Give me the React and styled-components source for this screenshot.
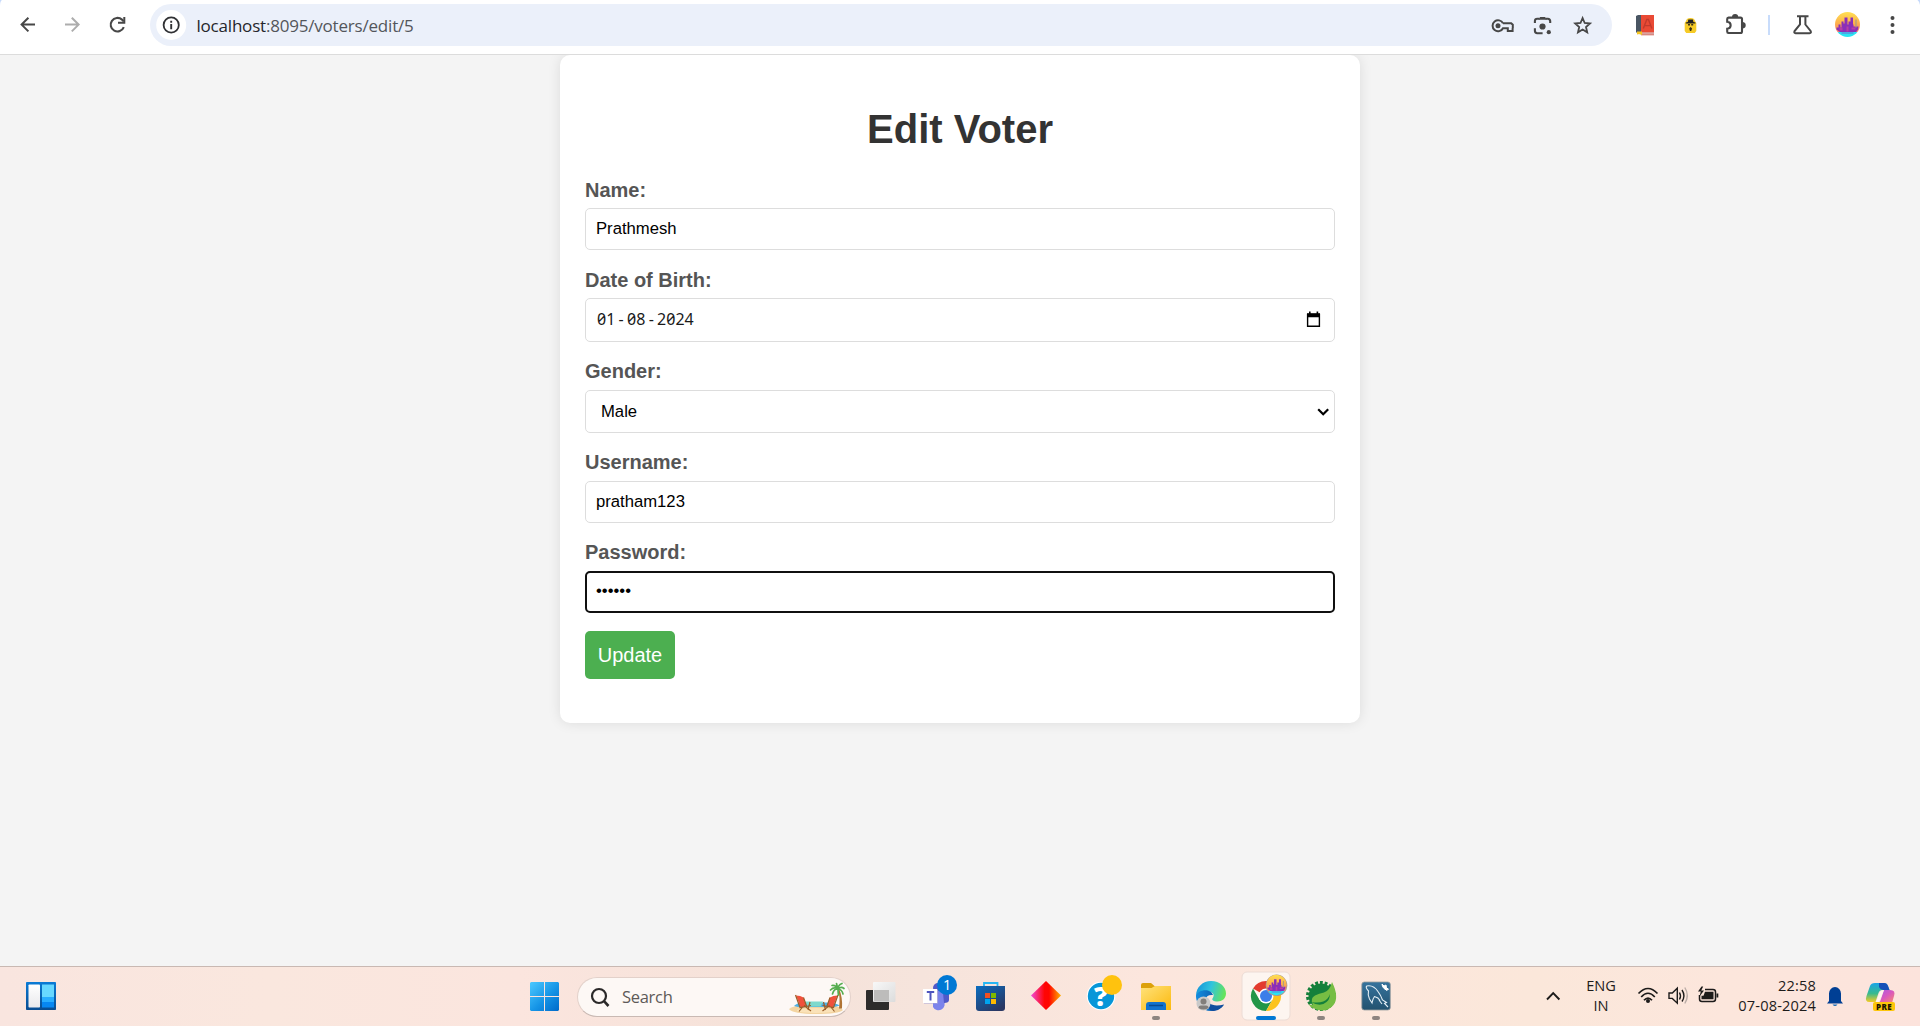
import React from "react";
import styled, { createGlobalStyle } from "styled-components";

const GlobalStyle = createGlobalStyle`
  * { box-sizing: border-box; }
  html, body { margin: 0; height: 100%; overflow: hidden; }
  body { font-family: "Liberation Sans", Arial, sans-serif; background: #f4f4f4; }
  svg { display: block; flex: none; }
`;

const Screen = styled.div`
  display: flex;
  flex-direction: column;
  width: 1920px;
  height: 1026px;
`;

/* ---------- browser toolbar ---------- */
const Toolbar = styled.header`
  display: flex;
  align-items: stretch;
  flex: none;
  height: 55px;
  padding-bottom: 4px;
  background: #fff;
  border-bottom: 1px solid #dcdcdc;
  position: relative;
  z-index: 1;
`;

const Omnibox = styled.div`
  display: flex;
  align-items: center;
  justify-content: space-between;
  width: 1462px;
  height: 42px;
  margin: 4px 8px 0 10px;
  border-radius: 21px;
  background: #ebf0fa;
`;

const Address = styled.div`
  display: flex;
  align-items: center;
`;

const Url = styled.span`
  margin-left: 4.5px;
  padding-top: 1px;
  font-family: "Open Sans", "Noto Sans", sans-serif;
  font-size: 17px;
  line-height: 24px;
  letter-spacing: -0.2px;
  color: #53565b;
  white-space: nowrap;
`;

const Host = styled.span`
  color: #25262a;
`;

/* ---------- page ---------- */
const Page = styled.main`
  flex: 1;
  display: flex;
  justify-content: center;
  align-items: flex-start;
  background: #f4f4f4;
  overflow: hidden;
`;

const Card = styled.form`
  display: flex;
  flex-direction: column;
  align-items: stretch;
  width: 800px;
  height: 668px;
  padding: 51px 25px 0;
  background: #fff;
  border-radius: 10px;
  box-shadow: 0 0 13px rgba(0, 0, 0, 0.1);
`;

const Title = styled.h1`
  margin: 0 0 27px;
  font-size: 40px;
  line-height: 46px;
  text-align: center;
  color: #333;
`;

const Group = styled.div`
  margin-bottom: ${(p) => p.$gap ?? 19}px;
`;

const Label = styled.label`
  display: block;
  margin-bottom: ${(p) => p.$space ?? 6}px;
  font-size: 20px;
  font-weight: bold;
  line-height: 23px;
  color: #555;
`;

const Field = styled.div`
  display: flex;
  align-items: center;
  justify-content: space-between;
  height: ${(p) => p.$height ?? 42}px;
  padding-left: ${(p) => (p.$focused ? 9 : 10)}px;
  border: ${(p) => (p.$focused ? "2px solid #101010" : "1px solid #ddd")};
  border-radius: 5px;
  background: #fff;
`;

const TextInput = styled.input`
  width: 100%;
  padding: 0 0 ${(p) => (p.type === "password" ? 2 : 0)}px;
  border: 0;
  outline: 0;
  background: transparent;
  color: #000;
  font-family: "Liberation Sans", Arial, sans-serif;
  font-size: 16.667px;
`;

const DateValue = styled.div`
  display: flex;
  gap: 1.3px;
  padding: 0 0 2px 1px;
  font-family: "Noto Sans", sans-serif;
  font-size: 16px;
  font-feature-settings: "zero";
  color: #1a1a1a;
`;

const Dash = styled.span`
  width: 9.15px;
  text-align: center;
`;

const Choice = styled.span`
  padding-left: 5px;
  font-size: 16.667px;
  color: #000;
`;

const Submit = styled.button`
  width: 90px;
  height: 48px;
  padding: 0;
  border: 0;
  border-radius: 5px;
  background: #4caf50;
  color: #fff;
  font-family: "Liberation Sans", Arial, sans-serif;
  font-size: 20px;
`;

/* ---------- taskbar ---------- */
const Taskbar = styled.footer`
  display: flex;
  flex: none;
  height: 60px;
  border-top: 1px solid #c9b8b2;
  background: linear-gradient(90deg, #f9e5df 0%, #fae7de 14%, #fbe5de 27%, #f5e2d9 40%, #f6e4dc 48%, #fce6dd 60%, #fbe7da 80%, #fce6dc 90%, #fce3dc 100%);
  font-family: "Open Sans", "Noto Sans", sans-serif;
`;

const Apps = styled.div`
  display: flex;
  align-items: center;
  flex: none;
  margin-left: 448px;
`;

const SearchBox = styled.div`
  display: flex;
  align-items: center;
  justify-content: space-between;
  width: 274px;
  height: 40px;
  margin: 0 3px 0 8px;
  border: 1px solid #e3d1ca;
  border-bottom-color: #c9b9b3;
  border-radius: 20px;
  background: #fdf8f5;
`;

const SearchPrompt = styled.div`
  display: flex;
  align-items: center;
  gap: 7px;
  font-size: 16.5px;
  letter-spacing: -0.3px;
  color: #5e5a58;
`;

const Tray = styled.div`
  display: flex;
  align-items: stretch;
  width: 390px;
  margin-left: auto;
`;

const TrayText = styled.div`
  width: ${(p) => p.$width}px;
  padding-top: 8px;
  text-align: ${(p) => p.$align};
  font-size: 14.6px;
  line-height: 20px;
  letter-spacing: ${(p) => p.$spacing ?? 0}px;
  color: #1d1b1a;
  white-space: nowrap;
`;

/* A drawing whose viewBox is a window [x, y, w, h] onto the screen grid. */
const Glyph = ({ box, children }) => (
  <svg width={box[2]} height={box[3]} viewBox={box.join(" ")} fill="none">
    {children}
  </svg>
);

const INK = "#474747";

const City = ({ cx, cy, r, id }) => (
  <g>
    <defs>
      <linearGradient id={id} x1="0" y1="0" x2="0" y2="1">
        <stop offset="0" stopColor="#ffe052" />
        <stop offset=".45" stopColor="#fdb04c" />
        <stop offset=".8" stopColor="#f77f6a" />
        <stop offset=".81" stopColor="#2fe0f2" />
        <stop offset="1" stopColor="#25e8f5" />
      </linearGradient>
    </defs>
    <circle cx={cx} cy={cy} r={r} fill={`url(#${id})`} />
    <g transform={`translate(${cx} ${cy}) scale(${r / 12.5})`}>
      <path d="M-11 3h2V0h2v3h1v-6h2v2h1v-6h3v7h1v-3h2v-4h2.500v7H6v2h3V2h2l-.5 3-2 2.500h-16L-11 5z" fill="#8a2fb8" />
      <path d="M-8 3h3v3h-3zM-1 2h2v5h-2zM4 3h4v2H4z" fill="#b63fa6" />
      <path d="M-6 8.500h12" stroke="#6a6fd6" strokeWidth="1" />
      <path d="M8.500-5v8" stroke="#a79c86" strokeWidth="1.200" />
    </g>
  </g>
);

const BrowserBar = () => (
  <Toolbar>
    <Glyph box={[0, 0, 50, 50]}>
      <path d="M0 0h2Q0 1 0 6z" fill="#c5d9fb" />
      <path d="M35 24.6H22M28.4 17.8 21.6 24.6l6.8 6.8" stroke={INK} strokeWidth="2" />
    </Glyph>
    <Glyph box={[50, 0, 45, 50]}>
      <path d="M65 24.6h13M71.8 17.8l6.8 6.8-6.8 6.8" stroke="#adadad" strokeWidth="2" />
    </Glyph>
    <Glyph box={[95, 0, 45, 50]}>
      <path d="M123.8 27.2A6.8 6.8 0 1 1 122 19.6l1.6 1.8" stroke={INK} strokeWidth="2.1" />
      <path d="M124.3 17v5.8H118" stroke={INK} strokeWidth="2" />
    </Glyph>
    <Omnibox>
      <Address>
        <Glyph box={[150, 4, 42, 42]}>
          <circle cx="171.2" cy="25" r="15" fill="#fff" />
          <circle cx="171.2" cy="25" r="7.6" stroke="#303134" strokeWidth="1.8" />
          <path d="M171.2 24v5.2M171.2 20.8v2" stroke="#303134" strokeWidth="1.9" />
        </Glyph>
        <Url><Host>localhost</Host>:8095/voters/edit/5</Url>
      </Address>
      <Glyph box={[1480, 4, 132, 42]}>
        <g stroke={INK} strokeWidth="2">
          <path d="M1503 23.3A5.5 5.5 0 1 0 1503 28.2H1507.8V31H1512.6V28.2M1503 23.3H1511.2L1512.8 24.8V28.2" />
          <path d="M1534.9 23v-2a2.4 2.4 0 0 1 2.4-2.3h2.3M1545.6 18.7h2.2a2.5 2.5 0 0 1 2.4 2.4V23M1534.9 28.2v2.6a2.4 2.4 0 0 0 2.4 2.4h5.3" strokeWidth="2.1" />
          <path d="M1582.6 18l2.1 5 5.3.5-4 3.5 1.2 5.3-4.6-2.8-4.6 2.8 1.2-5.3-4-3.5 5.3-.5z" strokeWidth="1.8" />
        </g>
        <g fill={INK}>
          <circle cx="1498" cy="25.7" r="2.5" />
          <path d="M1538.5 19.7l1.6-2.7h5l1.6 2.7z" />
          <circle cx="1542.5" cy="26.5" r="3.1" />
          <circle cx="1548.8" cy="32.2" r="2.1" />
        </g>
      </Glyph>
    </Omnibox>
    <Glyph box={[1620, 0, 50, 50]}>
      <path d="M1636 16l2-1h3v17.500h-5z" fill="#495563" />
      <path d="M1641 15h13v17.500h-13z" fill="#e94a35" />
      <path d="M1637 32.500h17v2.500h-14z" fill="#dfe3e6" />
      <path d="M1641 33h13M1641 34.800h13" stroke="#cf3f30" strokeWidth=".8" />
      <path d="M1637 31.500h5v3.500l-2.500-1-2.500.500z" fill="#f7c51e" />
      <path d="M1643.300 28.500l3.500-9h1.600l3.500 9M1645 25.600h5.300" stroke="#c23a2c" strokeWidth="1.400" />
    </Glyph>
    <Glyph box={[1670, 0, 45, 50]}>
      <path d="M1686 21q.5-3 4.500-3t4.500 3l1.300 2v8l-1.500 2h-8.600l-1.500-2v-8z" fill="#f6cb27" />
      <path d="M1687.800 22l.5-2.400h4.600l.5 2.400 2 .4v1.200h-9.600v-1.200z" fill="#222" />
      <path d="M1688 24h2v1.600h-2zM1691.200 24h2v1.600h-2zM1690.600 27l1.500 1.500-.9 2.500h-1.200l-.9-2.500z" fill="#3b3414" />
    </Glyph>
    <Glyph box={[1715, 0, 45, 50]}>
      <path d="M1728.500 17.600H1740.500Q1742 17.600 1742 19.100V31.500Q1742 33 1740.500 33H1728.500Q1727.200 33 1727.200 31.500V28.800C1731.800 28.400 1731.800 22.200 1727.200 21.800V19.100Q1727.200 17.600 1728.500 17.600Z" stroke={INK} strokeWidth="2.100" />
      <path d="M1732 17a3.100 3.100 0 0 1 6.200 0zM1743 22a3.300 3.300 0 0 1 0 6.500z" fill={INK} />
    </Glyph>
    <Glyph box={[1760, 0, 20, 50]}>
      <path d="M1769 15v20" stroke="#c8dcfb" strokeWidth="2" />
    </Glyph>
    <Glyph box={[1780, 0, 45, 50]}>
      <path d="M1797 16.200h11.500M1800 16.500v8l-5.400 6.500q-1 2.200 1 2.200h14q2 0 1-2.200l-5.200-6.500v-8" stroke={INK} strokeWidth="2" />
    </Glyph>
    <Glyph box={[1825, 0, 45, 50]}>
      <City cx={1847.5} cy={24.5} r={12.5} id="profileSky" />
    </Glyph>
    <Glyph box={[1870, 0, 50, 50]}>
      <circle cx="1892.500" cy="18" r="2" fill={INK} />
      <circle cx="1892.500" cy="25" r="2" fill={INK} />
      <circle cx="1892.500" cy="32" r="2" fill={INK} />
      <path d="M1920 0h-2.500q2 1.500 2.500 5z" fill="#c5d9fb" />
    </Glyph>
  </Toolbar>
);

const VoterForm = () => (
  <Card onSubmit={(e) => e.preventDefault()}>
    <Title>Edit Voter</Title>
    <Group>
      <Label>Name:</Label>
      <Field><TextInput type="text" defaultValue="Prathmesh" /></Field>
    </Group>
    <Group $gap={18}>
      <Label>Date of Birth:</Label>
      <Field $height={44}>
        <DateValue>
          <span>01</span><Dash>-</Dash><span>08</span><Dash>-</Dash><span>2024</span>
        </DateValue>
        <Glyph box={[1300, 305, 34, 30]}>
          <path d="M1307.600 314.500h11.800v11.700h-11.800z" stroke="#000" strokeWidth="1.400" />
          <path d="M1307 313.300h13v4h-13zM1309 311.600h1.600v2H1309zM1316.600 311.600h1.600v2h-1.600z" fill="#000" />
        </Glyph>
      </Field>
    </Group>
    <Group $gap={18}>
      <Label $space={7}>Gender:</Label>
      <Field $height={43}>
        <Choice>Male</Choice>
        <Glyph box={[1304, 397, 30, 30]}>
          <path d="M1318.200 409.200l5 5 5-5" stroke="#000" strokeWidth="2.200" />
        </Glyph>
      </Field>
    </Group>
    <Group $gap={18}>
      <Label $space={7}>Username:</Label>
      <Field><TextInput type="text" defaultValue="pratham123" /></Field>
    </Group>
    <Group $gap={18}>
      <Label $space={7}>Password:</Label>
      <Field $focused><TextInput type="password" defaultValue="secret" /></Field>
    </Group>
    <Submit type="submit">Update</Submit>
  </Card>
);

const BeachArt = () => (
  <Glyph box={[784, 978, 64, 36]}>
    <path d="M787 1008q6-4 15-4h24q10 0 15 5-4 4-27 4t-27-5z" fill="#f3d4a0" />
    <path d="M792 1005q4-4 10-3.500h22q9 0 14 3-6 2-12 1.500h-22q-6 1-12-1z" fill="#4fb1e4" />
    <ellipse cx="814" cy="1009.500" rx="19" ry="2.600" fill="#fae2b8" />
    <path d="M803 1000.500h18l-2.500 5h-13z" fill="#7ed9cc" />
    <path d="M794 994.500q4.500 0 7.500 2l3 9.500h-6z" fill="#f0513b" />
    <path d="M835.500 994.500q-4.500 0-7.500 2l-3 9.500h6z" fill="#f0513b" />
    <path d="M793.500 994l4.500 12.500 11-2M801.500 996.500l3 8.500M797 1010.500l4-5M802 1004.500l7 5.500M808 1001l-2 8" stroke="#9a5c26" strokeWidth="1.200" />
    <path d="M836 994l-4.500 12.500-11-2M828 996.500l-3 8.500M832.500 1010.500l-4-5M827.500 1004.500l-7 5.500M821.500 1001l2 8" stroke="#9a5c26" strokeWidth="1.200" />
    <path d="M836 988q2.500 8 1 19.500h3q.8-11-2.800-19.500z" fill="#b07434" />
    <path d="M836 988q-4-2.500-7.500 1M836 988q-4-.5-5.500 5M836 988q-2-4-6-3.500M836 988q0-4 4-5.500M836 988q3-3 6-.5M836 988q4 .5 5 5M836 988q0 3 .5 6M836 988q-1-3-1.500-5.500" stroke="#55ad4f" strokeWidth="1.700" strokeLinecap="round" />
  </Glyph>
);

const Desk = () => (
  <Taskbar>
    <Glyph box={[0, 967, 70, 59]}>
      <defs>
        <linearGradient id="panel" x1="0" y1="0" x2="0" y2="1"><stop stopColor="#0a7bd6" /><stop offset="1" stopColor="#084c91" /></linearGradient>
        <linearGradient id="paper" x1="0" y1="0" x2="0" y2="1"><stop stopColor="#fff" /><stop offset="1" stopColor="#e9e9ec" /></linearGradient>
      </defs>
      <rect x="26" y="982" width="30" height="28" rx=".8" fill="url(#panel)" />
      <rect x="28.500" y="984.500" width="11.500" height="23" rx=".8" fill="url(#paper)" />
      <path d="M42 984.500h12V997H42z" fill="#68d8ff" />
      <path d="M42 997h12v5H42z" fill="#28adff" />
      <path d="M42 1002h12v5.500H42z" fill="#0787f2" />
    </Glyph>
    <Apps>
      <Glyph box={[518, 967, 51, 59]}>
        <defs><linearGradient id="win" x1="530" y1="982" x2="559" y2="1011" gradientUnits="userSpaceOnUse"><stop stopColor="#4cc9ff" /><stop offset=".55" stopColor="#1594e6" /><stop offset="1" stopColor="#0069c9" /></linearGradient></defs>
        <path d="M531 982h13v14h-14v-13zM545 982h13l1 1v13h-14zM530 997h14v14h-13l-1-1zM545 997h14v13l-1 1h-13z" fill="url(#win)" />
      </Glyph>
      <SearchBox>
        <SearchPrompt>
          <Glyph box={[578, 977, 37, 38]}>
            <circle cx="599" cy="995" r="7" stroke="#2b2929" strokeWidth="2.200" />
            <path d="M604 1000.200l4.500 4.800" stroke="#2b2929" strokeWidth="2.600" />
          </Glyph>
          Search
        </SearchPrompt>
        <BeachArt />
      </SearchBox>
      <Glyph box={[854, 967, 55, 59]}>
        <defs><linearGradient id="pane" x1="0" y1="0" x2="1" y2="1"><stop stopColor="#f8f8f8" /><stop offset="1" stopColor="#dcdcdc" /></linearGradient></defs>
        <rect x="866" y="990" width="23" height="20" rx="1" fill="#2d2c2b" />
        <rect x="873" y="982" width="22.500" height="20" rx="1" fill="url(#pane)" />
        <path d="M874 990h15v11.500h-15z" fill="#bdbcbb" />
      </Glyph>
      <Glyph box={[909, 967, 55, 59]}>
        <circle cx="938" cy="988" r="5" fill="#5059c9" />
        <path d="M933 991h11v10a5.500 5.500 0 0 1-11 6z" fill="#7b83eb" />
        <path d="M943 993h6v7q0 3-5 3z" fill="#5059c9" />
        <rect x="924" y="989.500" width="14" height="14" fill="#a9a7d9" />
        <rect x="923" y="989" width="14" height="14" fill="#fff" />
        <path d="M926.800 992h7.400M930.500 992v8.500" stroke="#4e55be" strokeWidth="2" />
        <circle cx="947" cy="985" r="10" fill="#0078d4" />
        <text x="947.200" y="990.300" textAnchor="middle" fill="#fff" fontFamily="Open Sans, sans-serif" fontSize="14.500">1</text>
      </Glyph>
      <Glyph box={[964, 967, 55, 59]}>
        <defs><linearGradient id="bag" x1="0" y1="0" x2=".7" y2="1"><stop stopColor="#0a6dc0" /><stop offset="1" stopColor="#2a3763" /></linearGradient></defs>
        <path d="M984 988v-5h13.500v5" stroke="#27b7f3" strokeWidth="1.800" />
        <path d="M976 986h29v22a3 3 0 0 1-3 3h-23a3 3 0 0 1-3-3z" fill="url(#bag)" />
        <path d="M985 993h5v5h-5z" fill="#f25022" /><path d="M991 993h5v5h-5z" fill="#7fba00" />
        <path d="M985 999h5v5h-5z" fill="#00a4ef" /><path d="M991 999h5v5h-5z" fill="#ffb900" />
      </Glyph>
      <Glyph box={[1019, 967, 55, 59]}>
        <defs><linearGradient id="gem"><stop stopColor="#f04bd8" /><stop offset=".45" stopColor="#ff0505" /><stop offset=".6" stopColor="#ff0500" /><stop offset="1" stopColor="#ffb000" /></linearGradient></defs>
        <path d="M1046 981l15 14.500-15 14.500-15-14.500z" fill="url(#gem)" />
      </Glyph>
      <Glyph box={[1074, 967, 55, 59]}>
        <circle cx="1101" cy="996" r="14.300" fill="#fff" />
        <circle cx="1101" cy="996" r="13.200" fill="#0796d8" />
        <text x="1100.700" y="1005.500" textAnchor="middle" fill="#fff" fontFamily="Open Sans, sans-serif" fontWeight="800" fontSize="27">?</text>
        <circle cx="1112" cy="985" r="10" fill="#ffc20e" />
      </Glyph>
      <Glyph box={[1129, 967, 55, 59]}>
        <defs><linearGradient id="folder" x1="0" y1="0" x2="1" y2="1"><stop stopColor="#ffe27b" /><stop offset="1" stopColor="#fcb90d" /></linearGradient></defs>
        <path d="M1141 985q0-2 2-2h8l3.500 3H1169v6h-28z" fill="#dca10b" />
        <path d="M1141 988h10.500l3.500-2h16v24h-30z" fill="url(#folder)" />
        <path d="M1146 1010v-5q0-3 3-3h14q3 0 3 3v5z" fill="#1173cd" />
        <path d="M1149 1005.500h14" stroke="#074b91" strokeWidth="1.500" />
        <rect x="1152" y="1016" width="8" height="4" rx="2" fill="#8d8480" />
      </Glyph>
      <Glyph box={[1184, 967, 55, 59]}>
        <defs>
          <linearGradient id="edgeTop" x1="0" y1=".2" x2="1" y2=".4"><stop stopColor="#1493d9" /><stop offset=".5" stopColor="#30c4dd" /><stop offset="1" stopColor="#65e35b" /></linearGradient>
          <linearGradient id="edgeLow"><stop stopColor="#138ce0" /><stop offset="1" stopColor="#0c4b98" /></linearGradient>
        </defs>
        <path d="M1196 996c0-9 7-15 15-15 9 0 15 6 15 12.500 0 5-4 8-8.500 8-4 0-6-1.500-5-3 3-4 0-7-5-7-5 0-9.500 2-11.500 7z" fill="url(#edgeTop)" />
        <path d="M1196 996c2-7 15-8 17-1-8-1-9 6-5 10 5 5 11 3 16-.5-2 3.500-7 6.500-13 6.500-9 0-15-7-15-15z" fill="url(#edgeLow)" />
        <path d="M1207 998c0 6 6 9 17 6.500-3 4.500-7 6.500-12 6.500-5-2-7-8-5-13z" fill="#114e9e" />
        <circle cx="1203.500" cy="1003.500" r="7" fill="#c9c9c9" />
        <circle cx="1203.500" cy="1001.500" r="3" fill="#817e7b" />
        <path d="M1198.500 1008q0-2.500 2.500-2.500h5q2.500 0 2.500 2.500-5 3-10 0z" fill="#817e7b" />
      </Glyph>
      <Glyph box={[1239, 967, 55, 59]}>
        <rect x="1242" y="972" width="48" height="48" rx="5" fill="#fdf5f0" stroke="#ecdcd5" strokeWidth="1" />
        <path d="M1266 996L1253 988.500A15 15 0 0 1 1279 988.500H1266z" fill="#e33b2e" />
        <path d="M1253 988.500A15 15 0 0 0 1266 1011L1272.500 999.700 1259.500 999.700z" fill="#229648" />
        <path d="M1266 1011A15 15 0 0 0 1279 988.500H1266L1272.500 999.700z" fill="#fcc31e" />
        <circle cx="1266" cy="996" r="7.500" fill="#fff" />
        <circle cx="1266" cy="996" r="6" fill="#3c7ee9" />
        <circle cx="1276.500" cy="985.300" r="10.800" fill="#a59794" />
        <City cx={1276.5} cy={985} r={10.2} id="taskSky" />
        <rect x="1256" y="1016" width="20" height="4" rx="2" fill="#0078d4" />
      </Glyph>
      <Glyph box={[1294, 967, 55, 59]}>
        <circle cx="1321" cy="996" r="13" stroke="#15803b" strokeWidth="4" strokeDasharray="2.800 1.800" />
        <circle cx="1321" cy="996" r="12.500" fill="#15803b" />
        <path d="M1332 982q7.500 15 1.500 23-7 8-17 4.500-7-2.500-7.500-5 3 .5 4 .2-3.500-6 2-9.200 4-2 9-3 6-2 8-10.500z" fill="#76bd43" />
        <path d="M1311 1002q12 2 16.500-3.500 2-2 2.500-4.500 0 5-3.500 8-6 5.500-15.500 0z" fill="#15803b" />
        <rect x="1317" y="1016" width="8" height="4" rx="2" fill="#8d8480" />
      </Glyph>
      <Glyph box={[1349, 967, 55, 59]}>
        <defs><linearGradient id="sea" x1="0" y1="0" x2="0" y2="1"><stop stopColor="#36739d" /><stop offset="1" stopColor="#23526f" /></linearGradient></defs>
        <rect x="1361.800" y="982" width="28.500" height="28" rx="2.500" fill="url(#sea)" stroke="#9b9e9f" strokeWidth=".8" />
        <path d="M1366.500 986q7-1.500 11.500 5.500 3 4 4.500 8.500l4 2.500-2 1 3.500 3.500M1382 1004l-3-4M1366.500 986q-1 2 2 5-1 4 1 8l2.500 4q.5-4 2.500-6.500 4 1 5.500 4" stroke="#e5eff5" strokeWidth="1.100" />
        <path d="M1382 984l2 2 2-1 .500 3 2 1-1.500 1.500-3-2-1.500-2z" fill="#fff" stroke="#fff" />
        <rect x="1372" y="1016" width="8" height="4" rx="2" fill="#8d8480" />
      </Glyph>
    </Apps>
    <Tray>
      <Glyph box={[1530, 967, 48, 59]}>
        <path d="M1547 999.500l6.200-6.400 6.200 6.400" stroke="#1d1b1a" strokeWidth="1.900" />
      </Glyph>
      <TrayText $width={46} $align="center">ENG<br />IN</TrayText>
      <Glyph box={[1624, 967, 100, 59]}>
        <g stroke="#1d1b1a" strokeWidth="1.700">
          <path d="M1638.500 993.500q9.500-10 19 0M1641.200 997q6.800-7.500 13.600 0M1644 1000.300q4-4.500 8 0" />
          <path d="M1669 993h3.300l5-4.800v15l-5-4.800h-3.300z" strokeWidth="1.400" />
          <path d="M1679.500 992.500q2 3.500 0 7M1682 990q3.800 5.800 0 11.500" strokeWidth="1.400" />
          <path d="M1684.800 987.500q5 8 0 16" stroke="#bcaea8" strokeWidth="1.400" />
          <path d="M1705 989.500h8q2.500 0 2.500 2.500v7q0 2.500-2.500 2.500h-11q-2.500 0-2.500-2.500v-4" strokeWidth="1.500" />
        </g>
        <circle cx="1648" cy="1001" r="2" fill="#1d1b1a" />
        <path d="M1705 991.800h8.500v7.500h-12v-3.500h2zM1716.500 993.500h1.800v4h-1.800zM1701.500 986.500l-3.500 5h2.800l-1.300 5 4.500-6h-2.800l2-4z" fill="#1d1b1a" />
      </Glyph>
      <TrayText $width={92} $align="right" $spacing={0.15}>22:58<br />07-08-2024</TrayText>
      <Glyph box={[1816, 967, 40, 59]}>
        <path d="M1829 1001v-7.500a6 6.500 0 0 1 12 0v7.500l2 2.500h-16z" fill="#003f94" />
        <path d="M1832.500 1004.500h5q-2.500 3-5 0z" fill="#1167b5" />
      </Glyph>
      <Glyph box={[1856, 967, 64, 59]}>
        <defs>
          <linearGradient id="coA" x1="0" y1="0" x2="0" y2="1"><stop stopColor="#1aa5e8" /><stop offset=".55" stopColor="#38ba8f" /><stop offset="1" stopColor="#f4cc24" /></linearGradient>
          <linearGradient id="coB" x1="0" y1="0" x2="1" y2="1"><stop stopColor="#a15de8" /><stop offset=".5" stopColor="#d957be" /><stop offset="1" stopColor="#fb8d68" /></linearGradient>
        </defs>
        <path d="M1870 986q1-3 5-3h9q3 0 4 3l1.500 4h-7q-3 0-4 3l-3 9h-6q-5 0-3-6z" fill="url(#coA)" />
        <path d="M1879 983h5q3 0 4 3l1.500 4h-6q-3 0-4.500-3z" fill="#1550b8" />
        <path d="M1884 990h6q6 0 4 6l-2 7h-15q3 0 4-4z" fill="url(#coB)" />
        <path d="M1884 990l-5 12h-3l4-10q1-2 4-2z" fill="#fff4ef" />
        <rect x="1873" y="1002" width="22" height="9" rx="2" fill="#fdc60b" />
        <text x="1884" y="1009.600" textAnchor="middle" fill="#1d1600" fontFamily="Open Sans, sans-serif" fontWeight="800" fontSize="8" letterSpacing=".3">PRE</text>
      </Glyph>
    </Tray>
  </Taskbar>
);

export default function App() {
  return (
    <Screen>
      <GlobalStyle />
      <BrowserBar />
      <Page><VoterForm /></Page>
      <Desk />
    </Screen>
  );
}
